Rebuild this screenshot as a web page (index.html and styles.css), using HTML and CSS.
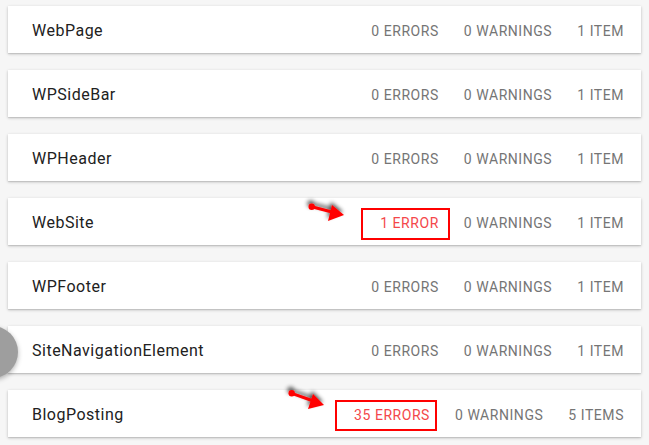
FILE: index.html
```html
<!DOCTYPE html>
<html>
<head>
<meta charset="utf-8">
<link rel="stylesheet" href="styles.css">
</head>
<body>
<div class="list">
  <div class="card"><span class="name">WebPage</span><div class="stats"><span>0 ERRORS</span><span>0 WARNINGS</span><span>1 ITEM</span></div></div>
  <div class="card"><span class="name">WPSideBar</span><div class="stats"><span>0 ERRORS</span><span>0 WARNINGS</span><span>1 ITEM</span></div></div>
  <div class="card"><span class="name">WPHeader</span><div class="stats"><span>0 ERRORS</span><span>0 WARNINGS</span><span>1 ITEM</span></div></div>
  <div class="card"><span class="name">WebSite</span><div class="stats"><span class="err mark mark-a">1 ERROR</span><span>0 WARNINGS</span><span>1 ITEM</span></div></div>
  <div class="card"><span class="name">WPFooter</span><div class="stats"><span>0 ERRORS</span><span>0 WARNINGS</span><span>1 ITEM</span></div></div>
  <div class="card"><span class="name">SiteNavigationElement</span><div class="stats"><span>0 ERRORS</span><span>0 WARNINGS</span><span>1 ITEM</span></div></div>
  <div class="card"><span class="name">BlogPosting</span><div class="stats"><span class="err mark mark-b">35 ERRORS</span><span>0 WARNINGS</span><span>5 ITEMS</span></div></div>
</div>
<div class="fab"></div>
<svg class="arrow arrow-a" width="60" height="40" viewBox="0 0 60 40">
  <defs>
    <filter id="sh" x="-50%" y="-50%" width="200%" height="200%">
      <feGaussianBlur in="SourceAlpha" stdDeviation="2"/>
      <feOffset dx="-1" dy="-3" result="b"/>
      <feComponentTransfer><feFuncA type="linear" slope="0.7"/></feComponentTransfer>
      <feMerge><feMergeNode/><feMergeNode in="SourceGraphic"/></feMerge>
    </filter>
  </defs>
  <g filter="url(#sh)">
    <circle cx="11.7" cy="11.7" r="3.2" fill="#f00"/>
    <line x1="11.7" y1="11.7" x2="32" y2="17" stroke="#f00" stroke-width="3"/>
    <polygon points="44,20 28,26 32,10" fill="#f00"/>
  </g>
</svg>
<svg class="arrow arrow-b" width="60" height="40" viewBox="0 0 60 40">
  <g filter="url(#sh)">
    <circle cx="11.7" cy="11.3" r="3.2" fill="#f00"/>
    <line x1="11.7" y1="11.3" x2="32" y2="18.5" stroke="#f00" stroke-width="3"/>
    <polygon points="44,23 28,27 33,12" fill="#f00"/>
  </g>
</svg>
</body>
</html>
```

FILE: styles.css
```css
html, body {
  margin: 0;
  padding: 0;
}
body {
  background: #f6f6f6;
  font-family: Roboto, "Liberation Sans", Arial, sans-serif;
  width: 649px;
  height: 445px;
  overflow: hidden;
  position: relative;
}
.list {
  display: flex;
  flex-direction: column;
  gap: 17px;
  padding: 6px 8px 0 8px;
}
.card {
  height: 47px;
  background: #fff;
  box-shadow: 0 1px 3px rgba(0,0,0,0.22), 0 1px 1px rgba(0,0,0,0.08);
  display: flex;
  align-items: center;
  justify-content: space-between;
  padding: 2px 17px 0 24px;
  box-sizing: border-box;
}
.name {
  font-size: 16px;
  letter-spacing: 0.5px;
  color: #212121;
}
.stats {
  display: flex;
  gap: 25px;
  font-size: 14px;
  letter-spacing: 0.55px;
  color: #757575;
}
.err {
  color: #f4474a;
}
.mark {
  position: relative;
}
.mark::after {
  content: "";
  position: absolute;
  border: 2px solid #f00;
}
.mark-a::after {
  left: -19px;
  right: -11px;
  top: -7px;
  bottom: -9px;
}
.mark-b::after {
  left: -19px;
  right: -7px;
  top: -7px;
  bottom: -8px;
}
.fab {
  position: absolute;
  left: -34px;
  top: 326px;
  width: 52px;
  height: 52px;
  border-radius: 50%;
  background: #9e9e9e;
  box-shadow: 0 2px 5px rgba(0,0,0,0.3);
}
.arrow {
  position: absolute;
  overflow: visible;
}
.arrow-a {
  left: 300px;
  top: 195px;
}
.arrow-b {
  left: 280px;
  top: 382px;
}
```
